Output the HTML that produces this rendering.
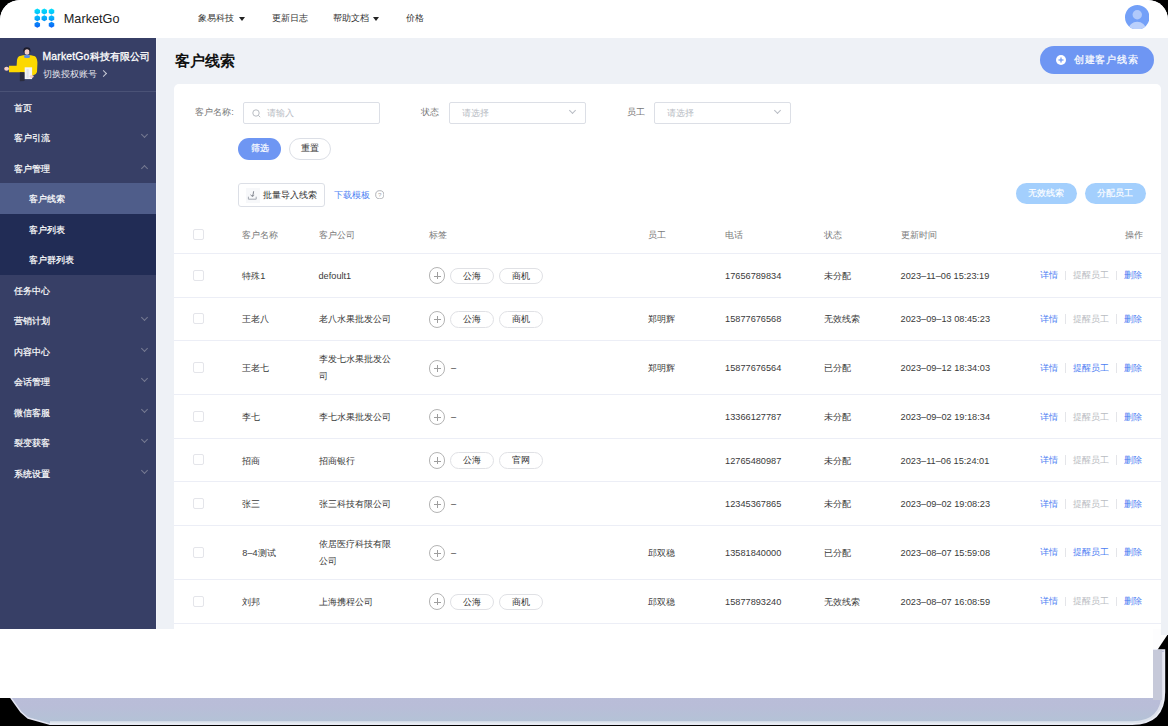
<!DOCTYPE html><html><head><meta charset="utf-8"><title>MarketGo</title><style>
*{margin:0;padding:0;box-sizing:border-box}
html,body{width:1171px;height:728px;overflow:hidden;background:#fff;font-family:"Liberation Sans",sans-serif;}
.abs{position:absolute}
#frame{position:absolute;left:0;top:0;width:1168px;height:726px;background:#000;overflow:hidden}
#app{position:absolute;left:0;top:0;width:1168px;height:629px;background:#eef1f6;overflow:hidden;border-radius:20px 20px 0 0}
#hdr{position:absolute;left:0;top:0;width:1168px;height:37.5px;background:#fff}
#side{position:absolute;left:0;top:37.5px;width:156px;height:591.5px;background:#373f66}
.nav{position:absolute;top:12px;font-size:9.2px;line-height:12px;color:#333;white-space:nowrap}
.tri{position:absolute;top:17px;width:0;height:0;border-left:3px solid transparent;border-right:3px solid transparent;border-top:4px solid #222}
.mi{position:absolute;left:0;width:156px;height:30.5px;font-size:9.2px;color:#fff;-webkit-text-stroke:0.2px #fff;line-height:32px;white-space:nowrap}
.chev{position:absolute;left:141.8px;width:5px;height:5px;border-right:1px solid #767a92;border-bottom:1px solid #767a92}
.t9{font-size:9.2px;line-height:12px;white-space:nowrap;position:absolute}
.lbl{color:#777}
.inp{position:absolute;height:21.3px;border:1px solid #dcdfe6;border-radius:2px;background:#fff}
.ph{color:#b8bcc4}
.cb{position:absolute;left:193px;width:11px;height:11px;border:1px solid #e4e5ea;border-radius:2px;background:#fff}
.rl{position:absolute;left:174px;width:987px;height:1px;background:#eceef6}
.plus{position:absolute;left:428.7px;width:16.8px;height:16.8px;border:1px solid #b4b4b4;border-radius:50%}
.plus:before{content:"";position:absolute;left:4px;top:7.4px;width:7px;height:1px;background:#9e9e9e}
.plus:after{content:"";position:absolute;left:7.4px;top:4px;width:1px;height:7px;background:#9e9e9e}
.tag{position:absolute;height:16.7px;width:44.5px;border:1px solid #e0e1e5;border-radius:8.5px;font-size:9.2px;line-height:15px;text-align:center;color:#333;background:#fff}
.cell{position:absolute;font-size:9.2px;line-height:17px;color:#3a3a3a;white-space:nowrap}
.ops{position:absolute;font-size:9.2px;line-height:12px;white-space:nowrap}
.blue{color:#4d80f3}
.gry{color:#b9bcc2}
.sep{position:absolute;width:1px;height:9.5px;background:#e4e5e9}
</style></head><body>
<div id="frame">
<svg class="abs" style="left:0;top:590px" width="1171" height="138" viewBox="0 590 1171 138">
<defs><linearGradient id="sg" x1="0" y1="0" x2="0" y2="1"><stop offset="0" stop-color="#bcbfdb"/><stop offset="0.75" stop-color="#b9bdd8"/><stop offset="1" stop-color="#b3c3d6"/></linearGradient></defs>
<path d="M0 600 H1168 V634 L1156 652 H0 Z" fill="#fdfdfe"/>
<path d="M11 698 V650 H1164.5 V692 Q1164.5 724.2 1132 724.2 H50 L44 722.5 L28 718 L21 712 L16 705 Z" fill="url(#sg)" stroke="#e4e6f3" stroke-width="1.4"/>
<path d="M1163 652 V692 Q1163 722.8 1132 722.8 H50" fill="none" stroke="#ffffff" stroke-opacity="0.55" stroke-width="3"/>
<rect x="1153" y="650" width="9" height="50" fill="#c6c9d9"/>
<rect x="0" y="629" width="1153" height="69" fill="#fff"/>
</svg>
<div class="abs" style="left:1161px;top:628px;width:7px;height:7px;background:#eef1f6"></div>
<div id="app">
<div id="hdr">
<svg class="abs" style="left:30px;top:5px" width="30" height="25" viewBox="0 0 30 25"><defs><linearGradient id="lg" gradientUnits="userSpaceOnUse" x1="0" y1="3.5" x2="0" y2="22.5"><stop offset="0" stop-color="#00dffb"/><stop offset="0.5" stop-color="#06acfb"/><stop offset="1" stop-color="#0a62f6"/></linearGradient></defs><g fill="url(#lg)"><polygon points="7.30,3.55 10.05,5.03 10.05,7.97 7.30,9.45 4.55,7.97 4.55,5.03"/><polygon points="14.30,3.55 17.05,5.03 17.05,7.97 14.30,9.45 11.55,7.97 11.55,5.03"/><polygon points="21.50,3.55 24.25,5.03 24.25,7.97 21.50,9.45 18.75,7.97 18.75,5.03"/><polygon points="7.30,10.25 10.05,11.72 10.05,14.67 7.30,16.15 4.55,14.67 4.55,11.72"/><polygon points="14.30,10.25 17.05,11.72 17.05,14.67 14.30,16.15 11.55,14.67 11.55,11.72"/><polygon points="21.50,10.25 24.25,11.72 24.25,14.67 21.50,16.15 18.75,14.67 18.75,11.72"/><polygon points="7.30,16.85 10.05,18.32 10.05,21.28 7.30,22.75 4.55,21.28 4.55,18.32"/><polygon points="21.50,16.85 24.25,18.32 24.25,21.28 21.50,22.75 18.75,21.28 18.75,18.32"/></g></svg>
<div class="abs" style="left:63.8px;top:10.5px;font-size:12.7px;line-height:16px;color:#222">MarketGo</div>
<div class="nav" style="left:198px">象易科技</div><div class="tri" style="left:238.5px"></div>
<div class="nav" style="left:271.6px">更新日志</div>
<div class="nav" style="left:332.6px">帮助文档</div><div class="tri" style="left:372.8px"></div>
<div class="nav" style="left:405.6px">价格</div>
<svg class="abs" style="left:1124.5px;top:4.5px" width="24.5" height="24.5" viewBox="0 0 24 24"><defs><clipPath id="cc"><circle cx="12" cy="12" r="12"/></clipPath></defs><circle cx="12" cy="12" r="12" fill="#73a0f8"/><g clip-path="url(#cc)"><circle cx="12" cy="9.5" r="4.6" fill="#b0c9fb"/><ellipse cx="12" cy="23.5" rx="8.5" ry="7" fill="#bad0fc"/></g></svg>
</div>
<div id="side">
<svg class="abs" style="left:0;top:4.2px" width="45" height="45" viewBox="0 0 45 45">
<ellipse cx="26.9" cy="8.6" rx="3.6" ry="3.4" fill="#1c1c2c"/>
<ellipse cx="27" cy="10" rx="2.4" ry="2.7" fill="#f5cfc6"/>
<path d="M19 14.2 Q27 11.8 35 14.2 Q37.6 16.5 37.4 22 L37 30 Q36.2 33 33 33.6 L25 33 L24 30.3 L9 30.3 L9 23.8 L16.6 23.8 L17 18 Q17.4 15.2 19 14.2 Z" fill="#fcd800"/>
<ellipse cx="27" cy="14.4" rx="3" ry="1.6" fill="#5b8de3"/>
<path d="M19.8 30.3 L25 30.3 L24.5 39 L19.8 39.2 Z" fill="#2a2c3f"/>
<rect x="24.7" y="25.3" width="7.4" height="11.8" fill="#f4f4f7"/>
<rect x="26.5" y="27" width="2.2" height="9" fill="#e2e3ea"/>
<ellipse cx="6.6" cy="26.8" rx="2.4" ry="2" fill="#f5cfc6"/>
<ellipse cx="31.6" cy="34.6" rx="2" ry="1.4" fill="#f5cfc6"/>
</svg>
<div class="abs" style="left:42.5px;top:12px;font-size:10.4px;letter-spacing:0.18px;line-height:14px;color:#fff;-webkit-text-stroke:0.3px #fff;white-space:nowrap">MarketGo科技有限公司</div>
<div class="abs" style="left:42.5px;top:30px;font-size:9.2px;line-height:13px;color:#e8e9ef;white-space:nowrap">切换授权账号</div>
<div class="abs" style="left:101.3px;top:33.5px;width:5px;height:5px;border-right:1px solid #c8cad6;border-top:1px solid #c8cad6;transform:rotate(45deg)"></div>
<div class="abs" style="left:0;top:53.6px;width:156px;height:1px;background:#4a5276"></div>
<div class="mi" style="top:54.400000000000006px;"><span style="position:absolute;left:14px">首页</span>
</div>
<div class="mi" style="top:84.9px;"><span style="position:absolute;left:14px">客户引流</span>
<div class="chev" style="top:10px;transform:rotate(45deg)"></div>
</div>
<div class="mi" style="top:115.4px;"><span style="position:absolute;left:14px">客户管理</span>
<div class="chev" style="top:13.5px;transform:rotate(-135deg)"></div>
</div>
<div class="mi" style="top:145.9px;background:#4f5d8a;"><span style="position:absolute;left:29px">客户线索</span>
</div>
<div class="mi" style="top:176.4px;background:#212c55;"><span style="position:absolute;left:29px">客户列表</span>
</div>
<div class="mi" style="top:206.9px;background:#212c55;"><span style="position:absolute;left:29px">客户群列表</span>
</div>
<div class="mi" style="top:237.4px;"><span style="position:absolute;left:14px">任务中心</span>
</div>
<div class="mi" style="top:267.9px;"><span style="position:absolute;left:14px">营销计划</span>
<div class="chev" style="top:10px;transform:rotate(45deg)"></div>
</div>
<div class="mi" style="top:298.4px;"><span style="position:absolute;left:14px">内容中心</span>
<div class="chev" style="top:10px;transform:rotate(45deg)"></div>
</div>
<div class="mi" style="top:328.9px;"><span style="position:absolute;left:14px">会话管理</span>
<div class="chev" style="top:10px;transform:rotate(45deg)"></div>
</div>
<div class="mi" style="top:359.4px;"><span style="position:absolute;left:14px">微信客服</span>
<div class="chev" style="top:10px;transform:rotate(45deg)"></div>
</div>
<div class="mi" style="top:389.9px;"><span style="position:absolute;left:14px">裂变获客</span>
<div class="chev" style="top:10px;transform:rotate(45deg)"></div>
</div>
<div class="mi" style="top:420.4px;"><span style="position:absolute;left:14px">系统设置</span>
<div class="chev" style="top:10px;transform:rotate(45deg)"></div>
</div>
</div>
<div class="abs" style="left:156px;top:37.5px;width:1px;height:591.5px;background:#f3f5fa"></div>
<div class="abs" style="left:174.5px;top:50px;font-size:15px;line-height:21px;font-weight:bold;color:#111;white-space:nowrap">客户线索</div>
<div class="abs" style="left:1039.7px;top:45.8px;width:114px;height:28px;border-radius:14px;background:#6e96f3"></div>
<svg class="abs" style="left:1056.2px;top:54.8px" width="10" height="10" viewBox="0 0 10 10"><circle cx="5" cy="5" r="5" fill="#fff"/><rect x="2.5" y="4.4" width="5" height="1.2" fill="#6b93f1"/><rect x="4.4" y="2.5" width="1.2" height="5" fill="#6b93f1"/></svg>
<div class="abs" style="left:1073.8px;top:52px;font-size:10.4px;letter-spacing:0.75px;line-height:15px;color:#fff;-webkit-text-stroke:0.2px #fff;white-space:nowrap">创建客户线索</div>
<div class="abs" style="left:174px;top:83.5px;width:987px;height:600px;background:#fff;border-radius:5px"></div>
<div class="t9 lbl" style="left:195.2px;top:106px">客户名称:</div>
<div class="inp" style="left:243px;top:102.4px;width:137px"></div>
<svg class="abs" style="left:251.5px;top:108.5px" width="9" height="9" viewBox="0 0 9 9"><circle cx="4" cy="4" r="3.2" fill="none" stroke="#b0b4bb" stroke-width="0.9"/><line x1="6.4" y1="6.4" x2="8.2" y2="8.2" stroke="#b0b4bb" stroke-width="0.9"/></svg>
<div class="t9 ph" style="left:267px;top:106.5px">请输入</div>
<div class="t9 lbl" style="left:421.3px;top:106px">状态</div>
<div class="inp" style="left:448.5px;top:102.4px;width:137px"></div>
<div class="t9 ph" style="left:461.5px;top:106.5px">请选择</div>
<div class="abs" style="left:569.5px;top:108px;width:5px;height:5px;border-right:1px solid #b8bcc4;border-bottom:1px solid #b8bcc4;transform:rotate(45deg)"></div>
<div class="t9 lbl" style="left:627.3px;top:106px">员工</div>
<div class="inp" style="left:654.4px;top:102.4px;width:137px"></div>
<div class="t9 ph" style="left:667.4px;top:106.5px">请选择</div>
<div class="abs" style="left:775px;top:108px;width:5px;height:5px;border-right:1px solid #b8bcc4;border-bottom:1px solid #b8bcc4;transform:rotate(45deg)"></div>
<div class="abs" style="left:238.3px;top:138.2px;width:43px;height:21.8px;border-radius:11px;background:#6e96f3;color:#fff;font-size:9.2px;-webkit-text-stroke:0.2px #fff;line-height:21.3px;text-align:center">筛选</div>
<div class="abs" style="left:289.2px;top:138.2px;width:42.3px;height:21.8px;border-radius:11px;background:#fff;border:1px solid #dcdfe6;color:#333;font-size:9.2px;line-height:19px;text-align:center">重置</div>
<div class="abs" style="left:238.4px;top:183px;width:87px;height:23.5px;border-radius:3px;border:1px solid #dcdfe6;background:#fff"></div>
<svg class="abs" style="left:246px;top:187.7px" width="14" height="15" viewBox="0 0 14 15"><rect width="14" height="15" fill="#f7f8fa"/><path d="M2.4 8.7 V11.2 H10.2 V8.7" fill="none" stroke="#a3a7b0" stroke-width="1"/><path d="M7.6 3.2 Q7.6 6 6.2 8.3" fill="none" stroke="#8c9099" stroke-width="1.1"/><path d="M4.6 6.6 L6.2 8.6 L8.2 7.2" fill="none" stroke="#8c9099" stroke-width="1"/></svg>
<div class="t9" style="left:262.7px;top:188.5px;color:#333">批量导入线索</div>
<div class="t9 blue" style="left:333.6px;top:188.5px">下载模板</div>
<svg class="abs" style="left:374.5px;top:189.8px" width="9.5" height="9.5" viewBox="0 0 10 10"><circle cx="5" cy="5" r="4.3" fill="none" stroke="#a4a7ad" stroke-width="0.9"/><text x="5" y="7.6" font-size="6.5" text-anchor="middle" fill="#a4a7ad" font-family="Liberation Sans">?</text></svg>
<div class="abs" style="left:1015.9px;top:183px;width:61.2px;height:21px;border-radius:11px;background:#a3cffd;color:#fff;font-size:9.2px;-webkit-text-stroke:0.15px #fff;line-height:21px;text-align:center">无效线索</div>
<div class="abs" style="left:1084.8px;top:183px;width:61.2px;height:21px;border-radius:11px;background:#a3cffd;color:#fff;font-size:9.2px;-webkit-text-stroke:0.15px #fff;line-height:21px;text-align:center">分配员工</div>
<div class="cb" style="top:229.1px"></div>
<div class="t9" style="left:242.3px;top:228.6px;color:#7a7a7a">客户名称</div>
<div class="t9" style="left:318.5px;top:228.6px;color:#7a7a7a">客户公司</div>
<div class="t9" style="left:428.5px;top:228.6px;color:#7a7a7a">标签</div>
<div class="t9" style="left:648.2px;top:228.6px;color:#7a7a7a">员工</div>
<div class="t9" style="left:725.1px;top:228.6px;color:#7a7a7a">电话</div>
<div class="t9" style="left:824.2px;top:228.6px;color:#7a7a7a">状态</div>
<div class="t9" style="left:900.6px;top:228.6px;color:#7a7a7a">更新时间</div>
<div class="t9" style="left:1124.8px;top:228.6px;color:#7a7a7a">操作</div>
<div class="rl" style="top:252.9px"></div>
<div class="cb" style="top:269.7px"></div>
<div class="cell" style="left:242.3px;top:267.9px">特殊1</div>
<div class="cell" style="left:318.5px;top:267.9px">defoult1</div>
<div class="plus" style="top:267.4px"></div>
<div class="tag" style="left:449.8px;top:267.59999999999997px">公海</div>
<div class="tag" style="left:498.8px;top:267.59999999999997px">商机</div>
<div class="cell" style="left:725.1px;top:267.9px">17656789834</div>
<div class="cell" style="left:824.2px;top:267.9px">未分配</div>
<div class="cell" style="left:900.6px;top:267.9px">2023–11–06 15:23:19</div>
<div class="ops blue" style="left:1039.8px;top:269.2px">详情</div>
<div class="sep" style="left:1065px;top:270.7px"></div>
<div class="ops gry" style="left:1072.6px;top:269.2px">提醒员工</div>
<div class="sep" style="left:1116.3px;top:270.7px"></div>
<div class="ops blue" style="left:1123.8px;top:269.2px">删除</div>
<div class="rl" style="top:296.5px"></div>
<div class="cb" style="top:313.2px"></div>
<div class="cell" style="left:242.3px;top:311.4px">王老八</div>
<div class="cell" style="left:318.5px;top:311.4px">老八水果批发公司</div>
<div class="plus" style="top:310.9px"></div>
<div class="tag" style="left:449.8px;top:311.09999999999997px">公海</div>
<div class="tag" style="left:498.8px;top:311.09999999999997px">商机</div>
<div class="cell" style="left:648.2px;top:311.4px">郑明辉</div>
<div class="cell" style="left:725.1px;top:311.4px">15877676568</div>
<div class="cell" style="left:824.2px;top:311.4px">无效线索</div>
<div class="cell" style="left:900.6px;top:311.4px">2023–09–13 08:45:23</div>
<div class="ops blue" style="left:1039.8px;top:312.7px">详情</div>
<div class="sep" style="left:1065px;top:314.2px"></div>
<div class="ops gry" style="left:1072.6px;top:312.7px">提醒员工</div>
<div class="sep" style="left:1116.3px;top:314.2px"></div>
<div class="ops blue" style="left:1123.8px;top:312.7px">删除</div>
<div class="rl" style="top:339.9px"></div>
<div class="cb" style="top:362.04999999999995px"></div>
<div class="cell" style="left:242.3px;top:360.24999999999994px">王老七</div>
<div class="cell" style="left:318.5px;top:351.34999999999997px">李发七水果批发公<br>司</div>
<div class="plus" style="top:359.74999999999994px"></div>
<div class="cell" style="left:451px;top:360.24999999999994px">–</div>
<div class="cell" style="left:648.2px;top:360.24999999999994px">郑明辉</div>
<div class="cell" style="left:725.1px;top:360.24999999999994px">15877676564</div>
<div class="cell" style="left:824.2px;top:360.24999999999994px">已分配</div>
<div class="cell" style="left:900.6px;top:360.24999999999994px">2023–09–12 18:34:03</div>
<div class="ops blue" style="left:1039.8px;top:361.54999999999995px">详情</div>
<div class="sep" style="left:1065px;top:363.04999999999995px"></div>
<div class="ops blue" style="left:1072.6px;top:361.54999999999995px">提醒员工</div>
<div class="sep" style="left:1116.3px;top:363.04999999999995px"></div>
<div class="ops blue" style="left:1123.8px;top:361.54999999999995px">删除</div>
<div class="rl" style="top:394.2px"></div>
<div class="cb" style="top:411.0px"></div>
<div class="cell" style="left:242.3px;top:409.2px">李七</div>
<div class="cell" style="left:318.5px;top:409.2px">李七水果批发公司</div>
<div class="plus" style="top:408.7px"></div>
<div class="cell" style="left:451px;top:409.2px">–</div>
<div class="cell" style="left:725.1px;top:409.2px">13366127787</div>
<div class="cell" style="left:824.2px;top:409.2px">未分配</div>
<div class="cell" style="left:900.6px;top:409.2px">2023–09–02 19:18:34</div>
<div class="ops blue" style="left:1039.8px;top:410.5px">详情</div>
<div class="sep" style="left:1065px;top:412.0px"></div>
<div class="ops gry" style="left:1072.6px;top:410.5px">提醒员工</div>
<div class="sep" style="left:1116.3px;top:412.0px"></div>
<div class="ops blue" style="left:1123.8px;top:410.5px">删除</div>
<div class="rl" style="top:437.8px"></div>
<div class="cb" style="top:454.45px"></div>
<div class="cell" style="left:242.3px;top:452.65px">招商</div>
<div class="cell" style="left:318.5px;top:452.65px">招商银行</div>
<div class="plus" style="top:452.15px"></div>
<div class="tag" style="left:449.8px;top:452.34999999999997px">公海</div>
<div class="tag" style="left:498.8px;top:452.34999999999997px">官网</div>
<div class="cell" style="left:725.1px;top:452.65px">12765480987</div>
<div class="cell" style="left:824.2px;top:452.65px">未分配</div>
<div class="cell" style="left:900.6px;top:452.65px">2023–11–06 15:24:01</div>
<div class="ops blue" style="left:1039.8px;top:453.95px">详情</div>
<div class="sep" style="left:1065px;top:455.45px"></div>
<div class="ops gry" style="left:1072.6px;top:453.95px">提醒员工</div>
<div class="sep" style="left:1116.3px;top:455.45px"></div>
<div class="ops blue" style="left:1123.8px;top:453.95px">删除</div>
<div class="rl" style="top:481.1px"></div>
<div class="cb" style="top:498.15000000000003px"></div>
<div class="cell" style="left:242.3px;top:496.35px">张三</div>
<div class="cell" style="left:318.5px;top:496.35px">张三科技有限公司</div>
<div class="plus" style="top:495.85px"></div>
<div class="cell" style="left:451px;top:496.35px">–</div>
<div class="cell" style="left:725.1px;top:496.35px">12345367865</div>
<div class="cell" style="left:824.2px;top:496.35px">未分配</div>
<div class="cell" style="left:900.6px;top:496.35px">2023–09–02 19:08:23</div>
<div class="ops blue" style="left:1039.8px;top:497.65000000000003px">详情</div>
<div class="sep" style="left:1065px;top:499.15000000000003px"></div>
<div class="ops gry" style="left:1072.6px;top:497.65000000000003px">提醒员工</div>
<div class="sep" style="left:1116.3px;top:499.15000000000003px"></div>
<div class="ops blue" style="left:1123.8px;top:497.65000000000003px">删除</div>
<div class="rl" style="top:525.2px"></div>
<div class="cb" style="top:546.95px"></div>
<div class="cell" style="left:242.3px;top:545.1500000000001px">8–4测试</div>
<div class="cell" style="left:318.5px;top:536.25px">依居医疗科技有限<br>公司</div>
<div class="plus" style="top:544.6500000000001px"></div>
<div class="cell" style="left:451px;top:545.1500000000001px">–</div>
<div class="cell" style="left:648.2px;top:545.1500000000001px">邱双稳</div>
<div class="cell" style="left:725.1px;top:545.1500000000001px">13581840000</div>
<div class="cell" style="left:824.2px;top:545.1500000000001px">已分配</div>
<div class="cell" style="left:900.6px;top:545.1500000000001px">2023–08–07 15:59:08</div>
<div class="ops blue" style="left:1039.8px;top:546.45px">详情</div>
<div class="sep" style="left:1065px;top:547.95px"></div>
<div class="ops blue" style="left:1072.6px;top:546.45px">提醒员工</div>
<div class="sep" style="left:1116.3px;top:547.95px"></div>
<div class="ops blue" style="left:1123.8px;top:546.45px">删除</div>
<div class="rl" style="top:578.7px"></div>
<div class="cb" style="top:595.75px"></div>
<div class="cell" style="left:242.3px;top:593.95px">刘邦</div>
<div class="cell" style="left:318.5px;top:593.95px">上海携程公司</div>
<div class="plus" style="top:593.45px"></div>
<div class="tag" style="left:449.8px;top:593.65px">公海</div>
<div class="tag" style="left:498.8px;top:593.65px">商机</div>
<div class="cell" style="left:648.2px;top:593.95px">邱双稳</div>
<div class="cell" style="left:725.1px;top:593.95px">15877893240</div>
<div class="cell" style="left:824.2px;top:593.95px">无效线索</div>
<div class="cell" style="left:900.6px;top:593.95px">2023–08–07 16:08:59</div>
<div class="ops blue" style="left:1039.8px;top:595.25px">详情</div>
<div class="sep" style="left:1065px;top:596.75px"></div>
<div class="ops gry" style="left:1072.6px;top:595.25px">提醒员工</div>
<div class="sep" style="left:1116.3px;top:596.75px"></div>
<div class="ops blue" style="left:1123.8px;top:595.25px">删除</div>
<div class="rl" style="top:622.8000000000001px"></div>
</div>
</div></body></html>
